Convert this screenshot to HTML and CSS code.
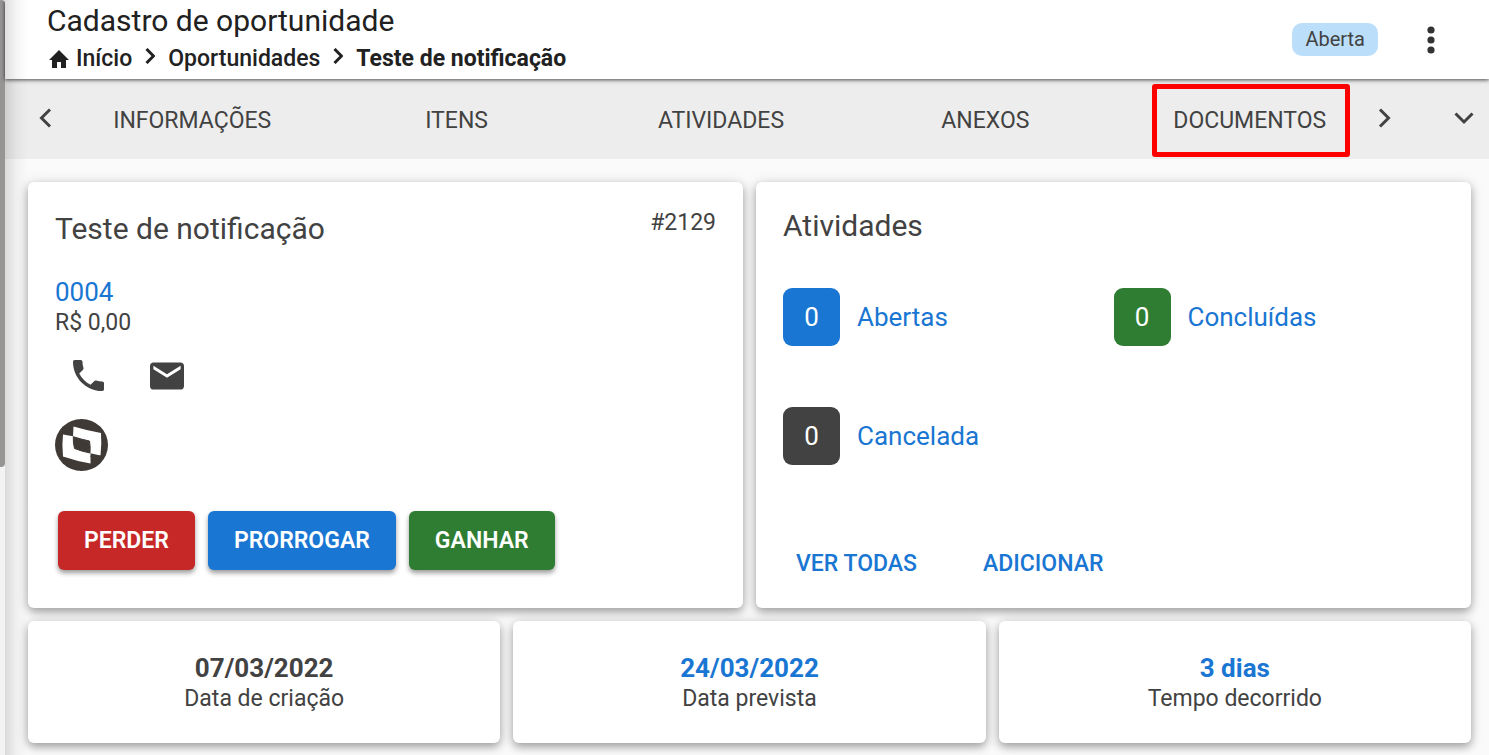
FILE: index.html
```html
<!DOCTYPE html>
<html lang="pt-BR">
<head>
  <meta charset="UTF-8">
  <meta name="viewport" content="width=device-width, initial-scale=1.0">
  <title>Cadastro de oportunidade</title>
  <link rel="stylesheet" href="styles.css">
</head>
<body>
<div class="scroll-track"><div class="scroll-thumb"></div></div>

<div class="page">
  <header class="header">
    <div class="header-text">
      <h1>Cadastro de oportunidade</h1>
      <nav class="breadcrumb">
        <a href="#" class="crumb">
          <svg class="home" viewBox="0 0 20 18"><path d="M8 18v-6h4v6h5v-8h3L10 0 0 10h3v8z"/></svg>
          Início
        </a>
        <svg class="crumb-sep" viewBox="0 0 10 16"><path d="M1.5 1l7 7-7 7"/></svg>
        <a href="#" class="crumb">Oportunidades</a>
        <svg class="crumb-sep" viewBox="0 0 10 16"><path d="M1.5 1l7 7-7 7"/></svg>
        <strong class="current">Teste de notificação</strong>
      </nav>
    </div>
    <span class="status">Aberta</span>
    <button class="menu-btn" aria-label="Mais opções">
      <svg viewBox="0 0 8 28"><circle cx="4" cy="4" r="3.6"/><circle cx="4" cy="14" r="3.6"/><circle cx="4" cy="24" r="3.6"/></svg>
    </button>
  </header>

  <nav class="tab-bar">
    <button class="arrow" aria-label="Anterior"><svg class="chevron" viewBox="0 0 14 20"><path d="M12 1.500L3.500 10l8.500 8.500"/></svg></button>
    <div class="tabs">
      <a href="#">INFORMAÇÕES</a>
      <a href="#">ITENS</a>
      <a href="#">ATIVIDADES</a>
      <a href="#">ANEXOS</a>
      <a href="#" class="marked">DOCUMENTOS</a>
    </div>
    <button class="arrow next" aria-label="Próximo"><svg class="chevron" viewBox="0 0 14 20"><path d="M2 1.500L10.500 10l-8.500 8.500"/></svg></button>
    <button class="arrow" aria-label="Expandir"><svg class="chevron-down" viewBox="0 0 20 14"><path d="M1.500 2.500L10 11l8.500-8.500"/></svg></button>
  </nav>

  <main class="content">
    <div class="row two">
      <section class="card deal">
        <div class="deal-head">
          <h2>Teste de notificação</h2>
          <span class="deal-id">#2129</span>
        </div>
        <a href="#" class="client">0004</a>
        <div class="value">R$ 0,00</div>
        <div class="contact">
          <button aria-label="Telefone"><svg class="phone" viewBox="3 3 18 18"><path d="M6.620 10.790c1.440 2.830 3.760 5.140 6.590 6.590l2.200-2.200c.27-.27.67-.36 1.020-.24 1.120.37 2.330.57 3.570.57.55 0 1 .45 1 1V20c0 .55-.45 1-1 1-9.390 0-17-7.610-17-17 0-.55.45-1 1-1h3.500c.55 0 1 .45 1 1 0 1.250.2 2.450.57 3.570.11.35.03.74-.25 1.020l-2.200 2.200z"/></svg></button>
          <button aria-label="E-mail"><svg class="mail" viewBox="2 4 20 16"><path d="M20 4H4c-1.100 0-1.990.9-1.990 2L2 18c0 1.100.9 2 2 2h16c1.100 0 2-.9 2-2V6c0-1.100-.9-2-2-2zm0 4l-8 5-8-5V6l8 5 8-5v2z"/></svg></button>
        </div>
        <svg class="avatar" viewBox="0 0 53 52" preserveAspectRatio="none">
          <ellipse cx="26.500" cy="26" rx="26.500" ry="26" fill="#403a36"/>
          <path fill="#fff" d="M18.500 7.500Q32 11.500 46 14Q46.800 25 45.500 36.500L8 37.500Q6.800 26 8 15.500L18 17.300Z"/>
          <path fill="#fff" d="M8 37.500L20 30L35.500 34V44.500Q21 42 8 37.500Z"/>
          <path fill="#403a36" d="M35.500 34.300L45.500 36.500V38H35.500Z"/>
          <path fill="#403a36" stroke="#403a36" d="M18.300 17.700Q27 20.500 34.500 22Q35.500 28 35 34Q27 32.500 19.500 29.500Q18 24 18.300 17.700Z"/>
        </svg>
        <div class="actions">
          <button class="btn red">PERDER</button>
          <button class="btn blue">PRORROGAR</button>
          <button class="btn green">GANHAR</button>
        </div>
      </section>

      <section class="card activities">
        <h2>Atividades</h2>
        <div class="counters">
          <a href="#" class="counter"><span class="badge blue">0</span>Abertas</a>
          <a href="#" class="counter"><span class="badge green">0</span>Concluídas</a>
          <a href="#" class="counter"><span class="badge dark">0</span>Cancelada</a>
        </div>
        <div class="links">
          <button class="text-btn">VER TODAS</button>
          <button class="text-btn">ADICIONAR</button>
        </div>
      </section>
    </div>

    <div class="row three">
      <section class="card info">
        <strong>07/03/2022</strong>
        <span>Data de criação</span>
      </section>
      <section class="card info highlight">
        <strong>24/03/2022</strong>
        <span>Data prevista</span>
      </section>
      <section class="card info highlight">
        <strong>3 dias</strong>
        <span>Tempo decorrido</span>
      </section>
    </div>
  </main>
</div>
</body>
</html>
```

FILE: styles.css
```css
* {
  box-sizing: border-box;
}
body {
  margin: 0;
  display: flex;
  min-height: 100vh;
  font-family: Roboto, sans-serif;
  font-size: 23px;
  color: #424242;
  background-color: #fafafa;
}
h1, h2 {
  margin: 0;
  font-weight: 400;
}
a {
  color: inherit;
  text-decoration: none;
}
button {
  padding: 0;
  border: none;
  background: none;
  font-family: inherit;
  font-size: 23px;
  color: inherit;
  cursor: pointer;
}
svg {
  display: block;
  flex: none;
  fill: currentColor;
}

/* barra lateral */
.scroll-track {
  width: 5px;
  flex: none;
  background-color: #f3f3f3;
}
.scroll-thumb {
  height: 467px;
  background-color: #979494;
  border-radius: 0 4px 4px 0;
}
.page {
  flex: 1;
  min-width: 0;
  position: relative;
}
.page::before {
  content: "";
  position: absolute;
  top: 0;
  bottom: 0;
  left: 0;
  width: 23px;
  background: linear-gradient(to right, rgba(0,0,0,0.13), rgba(0,0,0,0.04) 50%, rgba(0,0,0,0));
  pointer-events: none;
  z-index: 3;
}

/* topo */
.header {
  position: relative;
  z-index: 2;
  display: flex;
  align-items: center;
  height: 79px;
  padding: 0 50px 0 42px;
  background-color: #fff;
  color: #212121;
  box-shadow: 0 1px 4px rgba(0,0,0,0.7);
}
.header-text {
  flex: 1;
}
h1 {
  font-size: 30px;
  line-height: 36px;
}
.breadcrumb {
  display: flex;
  align-items: center;
  gap: 13px;
  margin-top: 2px;
  font-weight: 500;
  line-height: 36px;
}
.crumb {
  display: flex;
  align-items: center;
  gap: 7px;
}
.home {
  width: 20px;
  height: 18px;
  margin-left: 2px;
}
.crumb-sep {
  width: 10px;
  height: 16px;
  margin-bottom: 6px;
}
.crumb-sep path, .chevron path, .chevron-down path {
  fill: none;
  stroke: currentColor;
  stroke-width: 3;
}
.current {
  font-weight: 700;
}
.status {
  padding: 0 13px;
  line-height: 33px;
  font-size: 20px;
  color: #424242;
  background-color: #bbdefb;
  border-radius: 10px;
}
.menu-btn {
  margin-left: 45px;
  padding: 4px;
  color: #333;
}
.menu-btn svg {
  width: 8px;
  height: 28px;
}

/* abas */
.tab-bar {
  display: flex;
  align-items: center;
  height: 80px;
  padding: 0 15px 0 33px;
  background-color: #ededed;
}
.tabs {
  flex: 1;
  display: grid;
  grid-template-columns: repeat(5, 1fr);
  gap: 8px;
  margin-left: 12px;
}
.tabs a {
  position: relative;
  padding-top: 4px;
  line-height: 76px;
  text-align: center;
}
.marked::after {
  content: "";
  position: absolute;
  top: 5px;
  bottom: 2px;
  left: 30px;
  right: 28px;
  border: 5px solid #f00;
  border-radius: 3px;
}
.arrow {
  padding-bottom: 2px;
}
.chevron {
  width: 14px;
  height: 20px;
}
.chevron-down {
  width: 20px;
  height: 14px;
}
.next {
  margin-right: 62px;
}

/* cartoes */
.content {
  display: grid;
  gap: 13px;
  padding: 23px 18px 13px 23px;
}
.row {
  display: grid;
  gap: 13px;
}
.two {
  grid-template-columns: repeat(2, 1fr);
}
.three {
  grid-template-columns: repeat(3, 1fr);
}
.card {
  background-color: #fff;
  border-radius: 6px;
  box-shadow: 0 4px 8px rgba(0,0,0,0.3), 0 1px 14px rgba(0,0,0,0.12);
}
h2 {
  font-size: 30px;
  line-height: 36px;
}
.deal {
  padding: 26px 27px 37px;
}
.deal-head {
  display: flex;
  justify-content: space-between;
}
.deal-head h2 {
  padding-top: 3px;
}
.deal-id {
  line-height: 30px;
}
.client {
  display: block;
  margin-top: 30px;
  font-size: 26px;
  line-height: 30px;
  color: #1976d2;
}
.value {
  line-height: 32px;
}
.contact {
  display: flex;
  gap: 46px;
  margin-top: 21px;
  padding-left: 18px;
}
.phone {
  width: 31px;
  height: 31px;
}
.mail {
  width: 34px;
  height: 28px;
}
.avatar {
  width: 53px;
  height: 52px;
  margin-top: 28px;
}
.actions {
  display: flex;
  gap: 13px;
  margin-top: 40px;
  padding-left: 3px;
}
.btn {
  height: 59px;
  padding: 0 26px;
  font-weight: 600;
  color: #fff;
  border-radius: 6px;
  box-shadow: 0 3px 5px rgba(0,0,0,0.4);
}
.red {
  background-color: #c62828;
}
.blue {
  background-color: #1976d2;
}
.green {
  background-color: #2e7d32;
}
.dark {
  background-color: #424242;
}
.activities {
  padding: 26px 27px;
}
.counters {
  display: grid;
  grid-template-columns: repeat(2, 1fr);
  row-gap: 61px;
  margin-top: 44px;
}
.counter {
  display: flex;
  align-items: center;
  gap: 17px;
  font-size: 26px;
  color: #1976d2;
}
.badge {
  width: 57px;
  line-height: 58px;
  text-align: center;
  color: #fff;
  border-radius: 9px;
}
.links {
  display: flex;
  gap: 66px;
  margin-top: 81px;
  padding-left: 13px;
}
.text-btn {
  font-weight: 500;
  line-height: 36px;
  color: #1976d2;
}
.info {
  display: flex;
  flex-direction: column;
  align-items: center;
  padding: 32px 16px 28px;
  line-height: 32px;
}
.info strong {
  font-size: 26px;
  line-height: 30px;
}
.highlight strong {
  color: #1976d2;
}
```
